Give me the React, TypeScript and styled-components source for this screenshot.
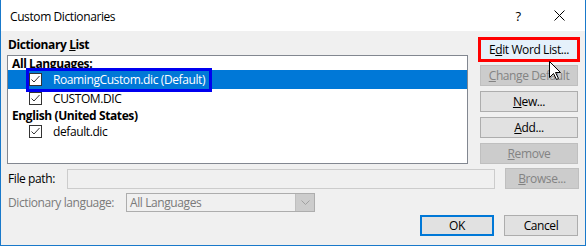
import React from 'react';
import styled, { createGlobalStyle, css } from 'styled-components';

const GlobalStyle = createGlobalStyle`
    body {
        margin: 0;
        font-family: "Segoe UI", "Open Sans", "Noto Sans", sans-serif;
        font-size: 12px;
        letter-spacing: -0.4px;
        color: #000;
        background: #fff;
    }
`;

const Window = styled.div`
    position: relative;
    width: 586px;
    height: 246px;
    box-sizing: border-box;
    border: 1px solid #1979ca;
    border-top: none;
    background: #f0f0f0;
    display: flex;
    flex-direction: column;
`;

const TitleBar = styled.div`
    height: 31px;
    background: #fff;
    display: flex;
    align-items: center;
    padding-left: 9px;
    flex-shrink: 0;
`;

const Title = styled.span`
    flex: 1;
    font-size: 12px;
    margin-top: 1px;
`;

const TitleButton = styled.div<{ $width: number }>`
    width: ${p => p.$width}px;
    height: 31px;
    display: flex;
    align-items: center;
    justify-content: center;
    font-size: 13px;
`;

const Body = styled.div`
    display: flex;
    flex-direction: column;
    padding: 5px 6px 0 6px;
`;

const TopSection = styled.div`
    display: flex;
    align-items: flex-start;
`;

const ListColumn = styled.div`
    width: 461px;
    display: flex;
    flex-direction: column;
`;

const GroupLabel = styled.div`
    height: 16px;
    line-height: 17px;
    font-weight: bold;
    padding-left: 1px;
    margin-bottom: 3px;
`;

const ListBox = styled.div`
    height: 109px;
    box-sizing: border-box;
    border: 1px solid #828790;
    background: #fff;
`;

const ListHeader = styled.div`
    height: 14px;
    box-sizing: border-box;
    padding: 2px 0 0 4px;
    line-height: 12px;
    font-weight: bold;
`;

const ListRow = styled.div<{ $selected?: boolean }>`
    position: relative;
    height: 19px;
    display: flex;
    align-items: center;
    padding-left: 21px;
    gap: 11px;
    ${p => p.$selected && css`
        background: #0078d7;
        color: #fff;
    `}
`;

const Highlight = styled.div`
    position: absolute;
    left: 18px;
    top: -2px;
    width: 186px;
    height: 24px;
    box-sizing: border-box;
    border: 3px solid #0000f0;
`;

const Box = styled.span`
    width: 13px;
    height: 13px;
    box-sizing: border-box;
    border: 1px solid #333;
    background: #fff;
    display: flex;
    flex-shrink: 0;
`;

const ButtonColumn = styled.div`
    display: flex;
    flex-direction: column;
    gap: 5px;
    margin-left: 12px;
    padding-top: 3px;
`;

const Button = styled.div<{ $disabled?: boolean; $width?: number; $hover?: boolean; $default?: boolean }>`
    width: ${p => p.$width ?? 98}px;
    height: 21px;
    box-sizing: border-box;
    border: 1px solid #adadad;
    background: #e1e1e1;
    display: flex;
    align-items: center;
    justify-content: center;
    flex-shrink: 0;
    ${p => p.$disabled && css`
        background: #cccccc;
        border-color: #bfbfbf;
        color: #838383;
    `}
    ${p => p.$hover && css`
        background: #e5f1fb;
        border-color: #0078d7;
        outline: 3px solid #ff0000;
        outline-offset: -1px;
    `}
    ${p => p.$default && css`
        border: 2px solid #0078d7;
    `}
`;

const FieldRow = styled.div<{ $top: number }>`
    display: flex;
    align-items: center;
    margin-top: ${p => p.$top}px;
    padding-left: 1px;
`;

const FieldLabel = styled.span<{ $width: number; $disabled?: boolean }>`
    width: ${p => p.$width}px;
    flex-shrink: 0;
    color: ${p => (p.$disabled ? '#7a7a7a' : '#000')};
`;

const PathInput = styled.div`
    width: 429px;
    height: 20px;
    box-sizing: border-box;
    border: 1px solid #cccccc;
    background: #f0f0f0;
    margin-right: 10px;
`;

const LangSelect = styled.div`
    width: 189px;
    height: 19px;
    box-sizing: border-box;
    border: 1px solid #adadad;
    background: #f0f0f0;
    display: flex;
    align-items: center;
    color: #7a7a7a;
    padding-left: 3px;
`;

const SelectText = styled.span`
    flex: 1;
`;

const SelectArrow = styled.div`
    width: 18px;
    height: 17px;
    background: #cccccc;
    border-left: 1px solid #bfbfbf;
    display: flex;
    align-items: center;
    justify-content: center;
`;

const Footer = styled.div`
    display: flex;
    justify-content: flex-end;
    gap: 10px;
    margin-top: 3px;
    padding-right: 1px;
`;

const Cursor = styled.svg`
    position: absolute;
    left: 548px;
    top: 61px;
`;

const U = styled.span`
    text-decoration: underline;
    text-underline-offset: 1px;
`;

const Check = () => (
    <Box>
        <svg width="11" height="11" viewBox="0 0 11 11">
            <path d="M1.5 5.5 L4 8 L9.5 2" fill="none" stroke="#333" strokeWidth="1" />
        </svg>
    </Box>
);

export default function App() {
    return (
        <>
            <GlobalStyle />
            <Window>
                <TitleBar>
                    <Title>Custom Dictionaries</Title>
                    <TitleButton $width={30}>?</TitleButton>
                    <TitleButton $width={52}>
                        <svg width="11" height="11" viewBox="0 0 11 11">
                            <path d="M0.5 0.5 L10.5 10.5 M10.5 0.5 L0.5 10.5" stroke="#000" strokeWidth="1" />
                        </svg>
                    </TitleButton>
                </TitleBar>
                <Body>
                    <TopSection>
                        <ListColumn>
                            <GroupLabel>Dictionary <U>L</U>ist</GroupLabel>
                            <ListBox>
                                <ListHeader>All Languages:</ListHeader>
                                <ListRow $selected>
                                    <Check />
                                    <span>RoamingCustom.dic (Default)</span>
                                    <Highlight />
                                </ListRow>
                                <ListRow>
                                    <Check />
                                    <span>CUSTOM.DIC</span>
                                </ListRow>
                                <ListHeader>English (United States)</ListHeader>
                                <ListRow>
                                    <Check />
                                    <span>default.dic</span>
                                </ListRow>
                            </ListBox>
                        </ListColumn>
                        <ButtonColumn>
                            <Button $hover>E<U>d</U>it Word List...</Button>
                            <Button $disabled><U>C</U>hange Default</Button>
                            <Button><U>N</U>ew...</Button>
                            <Button><U>A</U>dd...</Button>
                            <Button $disabled><U>R</U>emove</Button>
                        </ButtonColumn>
                    </TopSection>
                    <FieldRow $top={4}>
                        <FieldLabel $width={59}>File path:</FieldLabel>
                        <PathInput />
                        <Button $disabled $width={74}><U>B</U>rowse...</Button>
                    </FieldRow>
                    <FieldRow $top={4}>
                        <FieldLabel $width={118} $disabled>Dictionary lan<U>g</U>uage:</FieldLabel>
                        <LangSelect>
                            <SelectText>All Languages</SelectText>
                            <SelectArrow>
                                <svg width="9" height="5" viewBox="0 0 9 5">
                                    <path d="M0.5 0.5 L4.5 4.5 L8.5 0.5" fill="none" stroke="#a0a0a0" strokeWidth="1" />
                                </svg>
                            </SelectArrow>
                        </LangSelect>
                    </FieldRow>
                    <Footer>
                        <Button $default $width={74}>OK</Button>
                        <Button $width={74}>Cancel</Button>
                    </Footer>
                </Body>
                <Cursor width="13" height="20" viewBox="0 0 13 20">
                    <path d="M0.5 0.5 L0.5 16.5 L4.5 12.5 L7.5 18.5 L9.5 17.5 L6.5 11.5 L11.5 11.5 Z" fill="#fff" stroke="#000" strokeWidth="1" strokeLinejoin="miter" />
                </Cursor>
            </Window>
        </>
    );
}
